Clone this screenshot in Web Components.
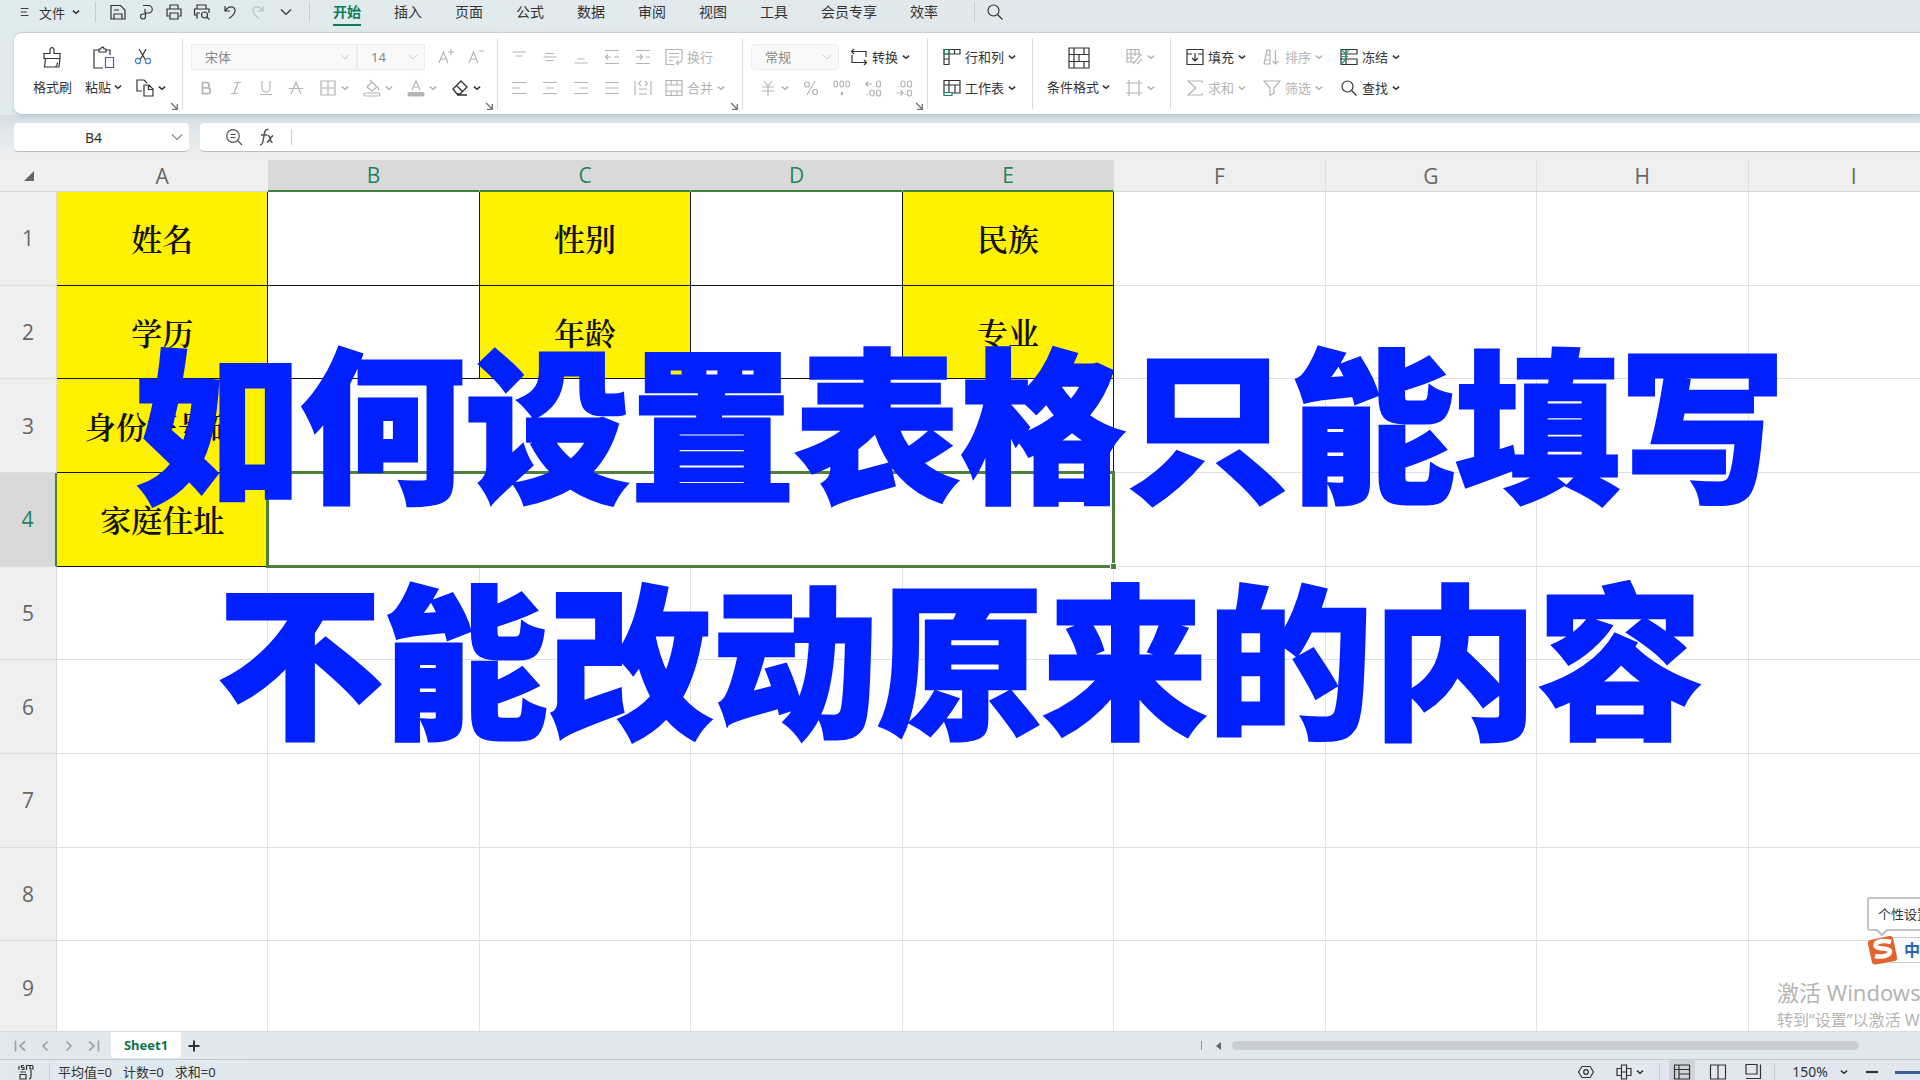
<!DOCTYPE html>
<html lang="zh-CN">
<head>
<meta charset="utf-8">
<title>表格</title>
<style>
html,body{margin:0;height:100%;overflow:hidden}
body{font-family:"Noto Sans","Noto Sans CJK SC",sans-serif;font-size:13px;color:#333}
</style>
</head>
<body>
<sheet-app></sheet-app>
<script>
const ICONS = {
  menu:'<path d="M3.500 4.500h10M3.500 9h8M3.500 13.500h10"/>',
  caret:'<path d="M5.500 7.500l3.500 3 3.500-3" stroke-width="1.700"/>',
  chevron:'<path d="M4 6.500l5 5 5-5"/>',
  save:'<path d="M2 2.500h9.500L16 7v9H2zM5 16v-5h8v5M5 7h5"/>',
  export:'<path d="M6 2.500h5.500a3.600 3.600 0 0 1 0 7.500H8.500v3.500a2.500 2.500 0 1 1-2.500-2.500h2.500M8 6v4"/>',
  print:'<path d="M5 6V2h8v4M4 13H2V6h14v7h-2M5 10h8v6H5z"/>',
  preview:'<path d="M4 6V2h9v4M5 15H4v-3H1.500V6H16v4M4 12v-2h3"/><circle cx="11.500" cy="12" r="3"/><path d="M14 14.500l2.500 2"/>',
  undo:'<path d="M4 3v5h5M4.500 7.500C8 2 14.500 3 14 8c-.3 3-3 5.500-6 7.500"/>',
  redo:'<path d="M14 3v5H9M13.500 7.500C10 2 3.500 3 4 8c.3 3 3 5.500 6 7.500"/>',
  search:'<circle cx="7.500" cy="7.500" r="5.500"/><path d="M11.500 11.500l5 5"/>',
  brush:'<path d="M9.500 8V3.500a2.200 2.200 0 0 1 4 0V8h6v5h-16V8zM5 13L4 21.500h14.500l1-8.500M15 21.500c1.500-1 2-3 2-4.500" transform="translate(-.5 -.5)"/>',
  paste:'<path d="M7 4H2v18h9M14 4h4v5M7 5V3h2c0-2.500 3-2.500 3 0h2v3H7z"/><path d="M13.500 11.500h8v10h-8z" stroke="#4a5f95"/>',
  cut:'<path d="M5 1l6.500 11M12 1L6 12"/><g stroke="#4d7fb5"><circle cx="4" cy="13" r="2.600"/><circle cx="14" cy="13" r="2.600"/></g>',
  copy:'<path d="M6 12H1V1h7l3 3M8 6h5l4 4v7H8zM12.500 6v4.500H17"/>',
  aplus:'<path d="M2 15L6.500 4 11 15M3.500 11h6M11 4h6M14 1v6"/>',
  aminus:'<path d="M2 15L6.500 4 11 15M3.500 11h6M12 3h5"/>',
  bold:'<path d="M5.500 3.500h4a2.700 2.700 0 0 1 0 5.400H5.500zM5.500 8.900h5a2.900 2.900 0 0 1 0 5.800h-5z" stroke-width="1.700"/>',
  italic:'<path d="M7 3.500h7M4 14.500h7M11 3.500l-4 11"/>',
  underline:'<path d="M5 2v7a4 4 0 0 0 8 0V2M3 15.500h12"/>',
  strike:'<path d="M4 15L9 3l5 12M2 9.500h14"/>',
  borders:'<path d="M2 2h14v14H2zM9 2v14M2 9h14"/>',
  fill:'<path d="M4 8l5-5 5 5-5 4zM7 1l3 3M15.500 8v3"/><rect x="1" y="14" width="16" height="3" rx="1.500"/>',
  color:'<path d="M5 11L9 2l4 9M6.500 8h5"/><rect x="1" y="13.500" width="16" height="3.500" rx="1.500" fill="currentColor"/>',
  eraser:'<path d="M2 10l8-8 6 6-7 7H6zM5.500 6.500l6 6M6 16h10" stroke-width="1.300"/>',
  top:'<path d="M2.500 4h13M5.500 8h7"/>', middle:'<path d="M5 5.500h8M2.500 9h13M5 12.500h8"/>', bottom:'<path d="M5.500 11h7M2.500 15h13"/>',
  outdent:'<path d="M2 2.500h14M11 9h5M2 15.500h14M8 9H2.500M5 6.500L2.500 9 5 11.500"/>',
  indent:'<path d="M2 2.500h14M12 9h4M2 15.500h14M2 9h6M6 6.500L8.500 9 6 11.500"/>',
  left:'<path d="M2 3.500h14M2 9h8M2 14.500h14"/>', center:'<path d="M2 3.500h14M5 9h8M2 14.500h14"/>', right:'<path d="M2 3.500h14M8 9h8M2 14.500h14"/>', justify:'<path d="M2 3.500h14M2 9h14M2 14.500h14"/>',
  spread:'<path d="M1 2v14M17 2v14M5 10h8M5 15h8M7 2L4.500 4.500 7 7M11 2l2.500 2.500L11 7"/>',
  wrap:'<path d="M9 16.500H1v-15h16v10M4 5.500h10M4 9h10M4 12.500h4M17 11c0 3-2 4-5 4M13.500 12.500L11.500 15l2 2"/>',
  merge:'<path d="M1 1.500h16v15H1zM1 6h16M1 12h16M6 1.500V6M12 1.500V6M6 12v4.500M12 12v4.500"/>',
  convert:'<path d="M4 1L1.500 3.500 4 6M1.500 3.500H16V9M14 12l2.500 2.500L14 17M16.500 14.500H2V7"/>',
  yen:'<path d="M5 2l4 5 4-5M3 8h12M3 12h12M9 7v10"/>',
  percent:'<circle cx="5" cy="5.500" r="2.500"/><circle cx="13" cy="13" r="2.500"/><path d="M13 2L5 16"/>',
  thousand:'<rect x="1" y="2" width="3.500" height="6" rx="1.700"/><rect x="7" y="2" width="3.500" height="6" rx="1.700"/><rect x="13" y="2" width="3.500" height="6" rx="1.700"/><path d="M9 13v2l-1 1" stroke-width="2"/>',
  decless:'<path d="M8 5H1.500M4 2.500L1.500 5 4 7.500M10 7v1M3 15v1"/><rect x="12.500" y="2" width="4" height="6" rx="2"/><rect x="6" y="11" width="4" height="6" rx="2"/><rect x="12.500" y="11" width="4" height="6" rx="2"/>',
  decmore:'<path d="M1.500 14H8M5.500 11.500L8 14l-2.500 2.500M10 15v1M3 7v1"/><rect x="12.500" y="11" width="4" height="6" rx="2"/><rect x="6" y="2" width="4" height="6" rx="2"/><rect x="12.500" y="2" width="4" height="6" rx="2"/>',
  rowcol:'<path d="M1 1.500h16V6H1zM6 1.500v15H1V6M11.500 1.500V6M1 11h5"/><path d="M1 1.500h5V6H1z" stroke="#16855f"/>',
  worksheet:'<path d="M6 14H1V1.500h16V14H6M1 6h16M6 1.500V14M12 6v8"/><path d="M1 13.500h8v3H1z" stroke="#16855f" fill="#fff"/>',
  condition:'<path d="M2 2h20v20H2zM7 2v20M2 8.500h20M2 15.500h20M12 8.500v7M17 2v6.500M17 15.500V22"/>',
  tablestyle:'<path d="M9 14H2V1.500h12V7M2 6h12M6 1.500V14M2 10h7M10 1.500V8M16.500 6L8 16M17 11l-5 5"/>',
  cellbox:'<path d="M4 1v16M14 1v16M1 4h16M1 14h16"/>',
  filldown:'<path d="M1 1.500h16v15H1zM1 6h5M12 6h5M9 5v8M6 10l3 3 3-3"/>',
  sort:'<path d="M1 16L4 2h3v14H1M3 7h4M2 12h5M12.500 2v14M9.500 13l3 3 3-3"/>',
  freeze:'<path d="M1 6h16V1.500H1v15h16V11H6M6 1.500v15M1 11h5" /><path d="M1 1.500l5 4.500M1 16.500L6 11M8 8.500H1M9 1.500L6 6" stroke="#16a07a"/>',
  sigma:'<path d="M16 4V2H2l8 7-8 7h14v-2"/>',
  filter:'<path d="M1 2h16l-6 7v5l-4 2.500V9z"/>',
  corner:'<path d="M4 4l8 8M12 5v7H5" stroke-width="1.800"/>',
  zoomout:'<circle cx="8" cy="8" r="6.300"/><path d="M5.500 6.500h5M5.500 9.500h5M13 13l4 4"/>',
  fx:'<path d="M2 17c2 0 2.500-1 3-4L6.500 5C7 2 8 1 10.500 1.500M3 7h6M9.500 7.500c3-1 2 7 5 7M15 7.500c-2 1-4 6-6 7" stroke-width="1.500"/>',
  first:'<path d="M3.500 3.500v11M13 4.500L8 9l5 4.500" stroke-width="1.700"/>', prev:'<path d="M11.500 4.500L7 9l4.500 4.500" stroke-width="1.700"/>', next:'<path d="M6.500 4.500L11 9l-4.500 4.500" stroke-width="1.700"/>', last:'<path d="M14.500 3.500v11M5 4.500L10 9l-5 4.500" stroke-width="1.700"/>',
  plus:'<path d="M9 3.500v11M3.500 9h11" stroke-width="2"/>', minus:'<path d="M3 9h12" stroke-width="2.200"/>',
  script:'<path d="M2 3v3H1M7 2.500H4.500v2H7v2H4.500M9.500 7V2.500H16M13 2.500V6h3V3M3 9h6M3 16V11.500h6V16zM12 16c2 0 2-1 2-3V7"/>',
  eye:'<path d="M1.500 9L5 3.500h8L16.500 9 13 14.500H5z"/><circle cx="9" cy="9" r="2.300"/>',
  move:'<path d="M6.500 2h5v14h-5zM6.500 5.500H2v7h4.500M11.500 5.500H16v7h-4.500M6.500 9h5"/>',
  viewgrid:'<path d="M1.500 2h15v14h-15zM1.500 6.500h15M6 2v14M6 11h10.500"/>',
  viewbook:'<path d="M1.500 2h15v14h-15zM9 2v14"/>',
  viewpage:'<path d="M2 1.500h11v9.500H2zM16.500 1.500v14H2"/>'
};
const css = {
  reset:`*,:host{box-sizing:border-box}button,input,select{font:inherit;color:inherit;margin:0;padding:0;border:0;background:none;outline:0}button{cursor:pointer}`
};
function define(name, html, setup){
  const t = document.createElement('template');
  t.innerHTML = html;
  customElements.define(name, class extends HTMLElement{
    constructor(){ super(); this.attachShadow({mode:'open'}); }
    connectedCallback(){
      if (this.shadowRoot.childNodes.length) return;
      this.shadowRoot.append(t.content.cloneNode(true));
      if (setup) setup(this, this.shadowRoot);
    }
  });
}

define('ui-icon', `<style>:host{display:inline-flex;flex:none;width:18px;height:18px}:host([large]){width:24px;height:24px}:host([caret]){width:8px;overflow:hidden;justify-content:center}:host([small]){width:14px;height:14px}svg{flex:none;width:100%;height:100%}:host([caret]) svg{width:16px;height:16px;align-self:center}</style><svg fill="none" stroke="currentColor" stroke-width="1.200" aria-hidden="true"></svg>`,
  (el, root) => {
    const s = root.querySelector('svg');
    s.setAttribute('viewBox', el.hasAttribute('large') ? '0 0 24 24' : '0 0 18 18');
    s.innerHTML = ICONS[el.getAttribute('name')] || '';
  });

/* Toolbar button: plain icon, icon with menu caret, icon with label, or tall with the label below. */
define('tool-button', `<style>${css.reset}
:host{display:flex;flex:none;align-items:flex-start;color:#333}:host([off]){color:#b4b4b4}
button{display:flex;align-items:center;justify-content:center;height:26px;min-width:var(--slot,30px);white-space:nowrap;line-height:18px}
:host([menu]) button{justify-content:flex-start;gap:4px;width:44px;padding-left:8px}
:host([labelled]) button{width:auto;padding:0;gap:4px;min-width:0}
:host([tall]) button{flex-direction:column;height:auto;gap:8px;min-width:0;width:auto;padding:0}
.label{display:flex;gap:3px;align-items:center}
:host(:not([labelled]):not([tall])) .label{display:none}
</style><button type="button"><ui-icon class="i"></ui-icon><span class="label"><slot></slot></span></button>`,
  (el, root) => {
    const i = root.querySelector('.i'), b = root.querySelector('button');
    i.setAttribute('name', el.getAttribute('icon'));
    if (el.hasAttribute('tall')) i.setAttribute('large','');
    if (el.getAttribute('hint')) b.setAttribute('aria-label', el.getAttribute('hint'));
    if (el.hasAttribute('off')) b.disabled = true;
    if (el.hasAttribute('menu')) {
      const c = document.createElement('ui-icon');
      c.setAttribute('name','caret'); c.setAttribute('caret','');
      (el.hasAttribute('tall') ? root.querySelector('.label') : b).append(c);
    }
    i.replaceWith(i.cloneNode());
  });

define('tool-select', `<style>${css.reset}
:host{display:grid;height:26px;color:#888;background:#f9f9f9;border:1px solid #ececec;align-items:center}
select,ui-icon{grid-area:1/1}select{appearance:none;width:100%;height:24px;padding-left:13px;opacity:1;color:#888}
ui-icon{justify-self:end;margin-right:4px;color:#c4c4c4;pointer-events:none}
</style><select><option></option></select><ui-icon name="chevron" small></ui-icon>`,
  (el, root) => { root.querySelector('option').textContent = el.getAttribute('value'); root.querySelector('select').setAttribute('aria-label', el.getAttribute('hint')); });

define('tool-group', `<style>:host{display:flex;flex:none;position:relative;height:71px;margin-top:5px;border-right:1px solid #dcdcdc;box-sizing:border-box}
:host([last]){border:0}.in{display:flex;flex:1}ui-icon{display:none;position:absolute;right:0;bottom:-5px;color:#777}:host([dialog]) ui-icon{display:block}</style><div class="in"><slot></slot></div><ui-icon name="corner" small></ui-icon>`);

define('tool-rows', `<style>:host{display:flex;flex-direction:column;gap:5px;padding-top:6px}::slotted(div){display:flex;height:26px;align-items:center}</style><slot></slot>`);

define('top-bar', `<style>${css.reset}
:host{display:flex;align-items:flex-start;height:32px;flex:none;background:linear-gradient(90deg,#dfebed,#e2e9ec 45%,#e0e7ef 70%)}
.file,.quick,nav{display:flex;align-items:center;height:24px}
.file{padding-left:18px}.file button{display:flex;align-items:center;gap:7px}
.file ui-icon[name=menu]{width:14px}
i{width:1px;height:20px;background:#c5ced2;margin-top:2px}
.quick{margin:0 14px 0 13px;gap:10px}.quick button{display:flex}.quick .off{color:#b7c0c4}
.file+i{margin-left:15px}
nav{gap:33px;padding:0 36px 0 23px;height:26px;font-size:14px}
nav a{color:#333;text-decoration:none;line-height:24px;height:26px;border-bottom:2px solid transparent}
nav a.on{color:#0f7d5b;font-weight:700;border-color:#0f7d5b}
.search{display:flex;margin:3px 0 0 11px}
</style>
<div class="file"><button type="button"><ui-icon name="menu"></ui-icon>文件<ui-icon name="caret" caret></ui-icon></button></div><i></i>
<div class="quick"><button aria-label="保存"><ui-icon name="save"></ui-icon></button><button aria-label="输出"><ui-icon name="export"></ui-icon></button><button aria-label="打印"><ui-icon name="print"></ui-icon></button><button aria-label="预览"><ui-icon name="preview"></ui-icon></button><button aria-label="撤销"><ui-icon name="undo"></ui-icon></button><button class="off" aria-label="恢复"><ui-icon name="redo"></ui-icon></button><button aria-label="更多"><ui-icon name="chevron"></ui-icon></button></div><i></i>
<nav><a class="on" href="#home">开始</a><a href="#insert">插入</a><a href="#page">页面</a><a href="#formula">公式</a><a href="#data">数据</a><a href="#review">审阅</a><a href="#view">视图</a><a href="#tools">工具</a><a href="#member">会员专享</a><a href="#work">效率</a></nav><i></i>
<button class="search" type="button" aria-label="搜索"><ui-icon name="search"></ui-icon></button>`);

define('ribbon-bar', `<style>
:host{display:block;flex:none;padding-left:14px;background:linear-gradient(90deg,#dfebed,#dde4ec 40%)}
.panel{box-sizing:border-box;display:flex;height:83px;background:#fff;border-top:1px solid #c9cfd2;border-bottom:1px solid #bcc5ca;border-radius:8px 0 0 8px;box-shadow:0 2px 4px #b9c3cc88;position:relative;overflow:hidden}
.clip{width:169px}.clip tool-button[tall]{margin:8px 0 0 19px}.clip tool-button[tall]+tool-button[tall]{margin-left:13px}.clip tool-rows{margin-left:6px}
.font{width:315px}.font tool-rows{padding-left:8px}.font .w{width:166px}.font .n{width:68px;margin-right:6px}
.align{width:245px;--slot:31px}.align tool-rows{padding-left:5px}.align tool-button[labelled]{margin-left:7px}
.num{width:185px;--slot:31px}.num tool-rows{padding-left:8px}.num .n{width:88px;border-radius:4px;margin-right:11px}
.rc{width:105px}.rc tool-rows,.edit tool-rows{padding-left:15px}
.cond{width:138px}.cond tool-button[tall]{margin:8px 0 0 14px}.cond tool-rows{margin-left:7px}
.edit div{gap:17px}
</style>
<div class="panel">
<tool-group class="clip" dialog><tool-button tall icon="brush">格式刷</tool-button><tool-button tall menu icon="paste">粘贴</tool-button>
 <tool-rows><div><tool-button icon="cut" hint="剪切"></tool-button></div><div><tool-button menu icon="copy" hint="复制"></tool-button></div></tool-rows></tool-group>
<tool-group class="font" dialog><tool-rows><div><tool-select class="w" value="宋体" hint="字体"></tool-select><tool-select class="n" value="14" hint="字号"></tool-select><tool-button off icon="aplus" hint="增大字号"></tool-button><tool-button off icon="aminus" hint="减小字号"></tool-button></div>
 <div><tool-button off icon="bold" hint="加粗"></tool-button><tool-button off icon="italic" hint="倾斜"></tool-button><tool-button off icon="underline" hint="下划线"></tool-button><tool-button off icon="strike" hint="删除线"></tool-button><tool-button off menu icon="borders" hint="边框"></tool-button><tool-button off menu icon="fill" hint="填充颜色"></tool-button><tool-button off menu icon="color" hint="字体颜色"></tool-button><tool-button menu icon="eraser" hint="清除"></tool-button></div></tool-rows></tool-group>
<tool-group class="align" dialog><tool-rows><div><tool-button off icon="top" hint="顶端对齐"></tool-button><tool-button off icon="middle" hint="垂直居中"></tool-button><tool-button off icon="bottom" hint="底端对齐"></tool-button><tool-button off icon="outdent" hint="减少缩进"></tool-button><tool-button off icon="indent" hint="增加缩进"></tool-button><tool-button off labelled icon="wrap">换行</tool-button></div>
 <div><tool-button off icon="left" hint="左对齐"></tool-button><tool-button off icon="center" hint="居中"></tool-button><tool-button off icon="right" hint="右对齐"></tool-button><tool-button off icon="justify" hint="两端对齐"></tool-button><tool-button off icon="spread" hint="分散对齐"></tool-button><tool-button off labelled menu icon="merge">合并</tool-button></div></tool-rows></tool-group>
<tool-group class="num" dialog><tool-rows><div><tool-select class="n" value="常规" hint="数字格式"></tool-select><tool-button labelled menu icon="convert">转换</tool-button></div>
 <div><tool-button off menu icon="yen" hint="货币"></tool-button><tool-button off icon="percent" hint="百分比"></tool-button><tool-button off icon="thousand" hint="千位分隔"></tool-button><tool-button off icon="decless" hint="增加小数位"></tool-button><tool-button off icon="decmore" hint="减少小数位"></tool-button></div></tool-rows></tool-group>
<tool-group class="rc"><tool-rows><div><tool-button labelled menu icon="rowcol">行和列</tool-button></div><div><tool-button labelled menu icon="worksheet">工作表</tool-button></div></tool-rows></tool-group>
<tool-group class="cond"><tool-button tall menu icon="condition">条件格式</tool-button><tool-rows><div><tool-button off menu icon="tablestyle" hint="表格样式"></tool-button></div><div><tool-button off menu icon="cellbox" hint="单元格"></tool-button></div></tool-rows></tool-group>
<tool-group class="edit" last><tool-rows><div><tool-button labelled menu icon="filldown">填充</tool-button><tool-button off labelled menu icon="sort">排序</tool-button><tool-button labelled menu icon="freeze">冻结</tool-button></div><div><tool-button off labelled menu icon="sigma">求和</tool-button><tool-button off labelled menu icon="filter">筛选</tool-button><tool-button labelled menu icon="search">查找</tool-button></div></tool-rows></tool-group>
</div>`);

define('formula-bar', `<style>${css.reset}
:host{display:flex;flex:none;gap:11px;padding:8px 0 8px 14px;background:linear-gradient(#d6dee5,#dfe6ea 30%,#efefef)}
.name,.fx{display:flex;align-items:center;height:29px;background:#fff;border-bottom:1px solid #b9bebf;border-radius:4px}
.name{width:175px;padding-right:3px}.name input{flex:1;min-width:0;text-align:center;font-size:14px;padding-left:5px}.name button{display:flex;color:#888}
.fx{flex:1;padding-left:25px;gap:15px;border-radius:4px 0 0 4px;color:#555}.fx button{display:flex}.fx i{width:1px;height:16px;background:#ccc}.fx input{flex:1}
</style><div class="name"><input aria-label="名称框" value="B4"><button aria-label="展开"><ui-icon name="chevron" ></ui-icon></button></div>
<div class="fx"><button aria-label="浏览"><ui-icon name="zoomout"></ui-icon></button><button aria-label="插入函数"><ui-icon name="fx"></ui-icon></button><i></i><input aria-label="编辑栏"></div>`);

define('sheet-grid', `<style>
:host{display:block;flex:1;min-height:0;overflow:hidden;background:#fff}
table{width:calc(100% + 40px);height:875px;table-layout:fixed;border-collapse:separate;border-spacing:0}
.rh{width:57px}
tbody tr{height:93px}
th{font:400 21px "Open Sans","Noto Sans",sans-serif;color:#666;background:#efefef;padding:0}
thead th{height:32px;box-sizing:border-box;border-bottom:1px solid #d6d6d6;border-right:1px solid #dcdcdc;line-height:28px}
thead th.plain{border-right-color:#efefef}
thead th.sel{background:#d9d9d9;color:#1f8465;border-right-color:#d9d9d9;border-bottom:2px solid #3f8040}
tbody th{border-bottom:1px solid #dedede;border-right:1px solid #dcdcdc;box-sizing:border-box}
tbody th.sel{background:#d9d9d9;color:#1f8465;border-right:2px solid #4c7f3a}
td{border-right:1px solid #e3e3e3;border-bottom:1px solid #e0e0e0;padding:0;text-align:center;font:600 31px "Noto Serif CJK SC","Noto Sans CJK SC",serif;line-height:40px;color:#111}
td.k,td.v{border-color:#111}td.k{background:#fff200}
td.cur{position:relative;padding:0}
td.cur::before{content:"";position:absolute;inset:-2px;border:3px solid #4f7f3b}
td.cur::after{content:"";position:absolute;right:-4px;bottom:-4px;width:5px;height:5px;background:#4f7f3b;border:1px solid #fff}
.corner svg{display:block;margin-left:24px}
</style><table><thead></thead><tbody></tbody></table>`,
  (el, root) => {
    root.querySelector('thead').innerHTML = '<tr><th class="rh corner plain"><svg width="10" height="10"><path d="M10 0v10H0z" fill="#666"/></svg></th>' +
      [...'ABCDEFGHI'].map(c => `<th scope="col" class="${'BCDE'.includes(c) ? 'sel' : c === 'A' ? 'plain' : ''}">${c}</th>`).join('') + '</tr>';
    const k = t => `<td class="k">${t}</td>`, v = '<td class="v"></td>', e = n => '<td></td>'.repeat(n);
    const rows = [
      k('姓名') + v + k('性别') + v + k('民族') + e(4),
      k('学历') + v + k('年龄') + v + k('专业') + e(4),
      k('身份证号码') + '<td class="v" colspan="4"></td>' + e(4),
      k('家庭住址') + '<td class="v cur" colspan="4"></td>' + e(4),
      e(9), e(9), e(9), e(9), e(9)];
    root.querySelector('tbody').innerHTML = rows.map((r, i) => `<tr><th scope="row" class="${i === 3 ? 'sel' : ''}">${i + 1}</th>${r}</tr>`).join('');
  });

define('sheet-tabs', `<style>${css.reset}
:host{display:flex;flex:none;height:28px;align-items:center;background:linear-gradient(90deg,#dfe9ee,#e1e7ef);border-top:1px solid #d6dcdf}
.nav{display:flex;gap:6px;padding:0 9px 0 12px;color:#9aa5ab}.nav button,.add,.arrow{display:flex}
.tab{align-self:flex-start;width:70px;height:26px;background:#fff;color:#12704f;font-weight:700;border-radius:0 0 4px 4px;line-height:24px}
.add{margin-left:4px}.grow{flex:1}.bar{width:1px;height:9px;background:#8d959b}
.arrow{margin:0 11px 0 14px}.track{width:627px;height:9px;border-radius:5px;background:#c8ced4;margin-right:61px}
</style><div class="nav"><button aria-label="首个"><ui-icon name="first"></ui-icon></button><button aria-label="上一个"><ui-icon name="prev"></ui-icon></button><button aria-label="下一个"><ui-icon name="next"></ui-icon></button><button aria-label="末个"><ui-icon name="last"></ui-icon></button></div>
<button class="tab">Sheet1</button><button class="add" aria-label="新建工作表"><ui-icon name="plus"></ui-icon></button><span class="grow"></span><span class="bar"></span>
<button class="arrow" aria-label="向左滚动"><svg width="5" height="8"><path d="M5 0v8L0 4z" fill="#59636a"/></svg></button><div class="track"></div>`);

define('status-bar', `<style>${css.reset}
:host{display:flex;flex:none;height:21px;align-items:center;background:linear-gradient(90deg,#dfe9ee,#e1e7ef);border-top:1px solid #c3cbd0;overflow:hidden;line-height:20px;padding-top:4px}
button{display:flex}i{width:1px;height:18px;background:#c5ced4}
.l{display:flex;align-items:center;padding-left:17px}.l i{margin:0 8px 0 14px}.stats{display:flex;gap:11px}
.r{display:flex;align-items:center;margin-left:auto}
.on{width:26px;height:24px;background:#cdd3d8;border-radius:3px;align-items:center;justify-content:center;margin:0 14px 0 9px}
.eye{margin-right:20px}.move{gap:3px;margin-right:15px}.book{margin-right:17px}.page{margin-right:12px}.minus{margin-left:15px}
.zoom{align-items:center;gap:12px;margin-left:17px;font-size:14px}
input{appearance:none;width:120px;height:3px;background:#3c5e9a;margin:0 -95px 0 14px}input::-webkit-slider-thumb{appearance:none;width:10px;height:10px}
</style><div class="l"><button aria-label="脚本"><ui-icon name="script"></ui-icon></button><i></i><div class="stats"><span>平均值=0</span><span>计数=0</span><span>求和=0</span></div></div>
<div class="r"><button class="eye" aria-label="护眼"><ui-icon name="eye"></ui-icon></button><button class="move" aria-label="聚光"><ui-icon name="move"></ui-icon><ui-icon name="caret" caret></ui-icon></button><i></i>
<button class="on" aria-label="普通视图"><ui-icon name="viewgrid"></ui-icon></button><button class="book" aria-label="分页预览"><ui-icon name="viewbook"></ui-icon></button><button class="page" aria-label="页面布局"><ui-icon name="viewpage"></ui-icon></button><i></i>
<button class="zoom">150%<ui-icon name="caret" caret></ui-icon></button><button class="minus" aria-label="缩小"><ui-icon name="minus"></ui-icon></button><input type="range" aria-label="缩放" max="400" value="400"></div>`);

/* Input-method bubble and toolbar, docked against the right edge of the screen. */
define('ime-dock', `<style>${css.reset}
:host{position:absolute;right:0;bottom:115px;width:53px;display:flex;flex-direction:column;overflow:hidden;color:#333}
.tip{width:90px;height:34px;border:2px solid #c2c6c8;border-radius:3px;background:#fff;line-height:30px;padding-left:9px;white-space:nowrap}
.arrow{display:block;margin:-2px 0 -2px 8px}
.bar{display:flex;align-items:center}.bar svg{flex:none;position:relative;z-index:1}
.zh{flex:none;width:60px;height:26px;margin-left:-8px;border:1px solid #c9c9c9;background:#fff;padding-left:13px;font-weight:700;font-size:16px;color:#2667b0;line-height:24px;text-align:left}
</style><div class="tip">个性设置</div><svg class="arrow" width="14" height="8"><path d="M1 0l6 6 6-6" fill="#fff" stroke="#b5c0c2" stroke-width="2"/></svg>
<div class="bar"><svg width="31" height="30" viewBox="0 0 31 30"><path d="M3 5L22 1q3-.5 4 2l4 19q.500 3-2 4L9 29.500q-3 .5-4-2L1 9q-.5-3 2-4z" fill="#e4632d"/><path d="M24 7C17 5 9 6 8.500 10c-.5 5 14 2 14.500 6.500C23 21 14 22.500 8 21" fill="none" stroke="#fff" stroke-width="4.500"/></svg><button class="zh">中</button></div>`);

define('activate-note', `<style>:host{position:absolute;right:0;bottom:49px;width:143px;overflow:hidden;white-space:nowrap;color:#b5b5b5}
p{margin:0}.a{font-size:22px;line-height:34px}.b{font-size:16px;line-height:22px}</style><p class="a">激活 Windows</p><p class="b">转到“设置”以激活 Windows。</p>`);

define('video-caption', `<style>:host{position:absolute;inset:0;display:flex;flex-direction:column;justify-content:center;align-items:center;pointer-events:none;padding-bottom:8px}
p{margin:0;font:900 165px "Noto Sans CJK SC",sans-serif;line-height:236px;color:#0020ff;-webkit-text-stroke:3px #0020ff;white-space:nowrap}</style><p>如何设置表格只能填写</p><p>不能改动原来的内容</p>`);

define('sheet-app', `<style>:host{display:flex;flex-direction:column;height:100vh;position:relative;overflow:hidden}</style>
<top-bar></top-bar><ribbon-bar></ribbon-bar><formula-bar></formula-bar><sheet-grid></sheet-grid><sheet-tabs></sheet-tabs><status-bar></status-bar>
<ime-dock></ime-dock><activate-note></activate-note><video-caption></video-caption>`);
</script>
</body>
</html>
